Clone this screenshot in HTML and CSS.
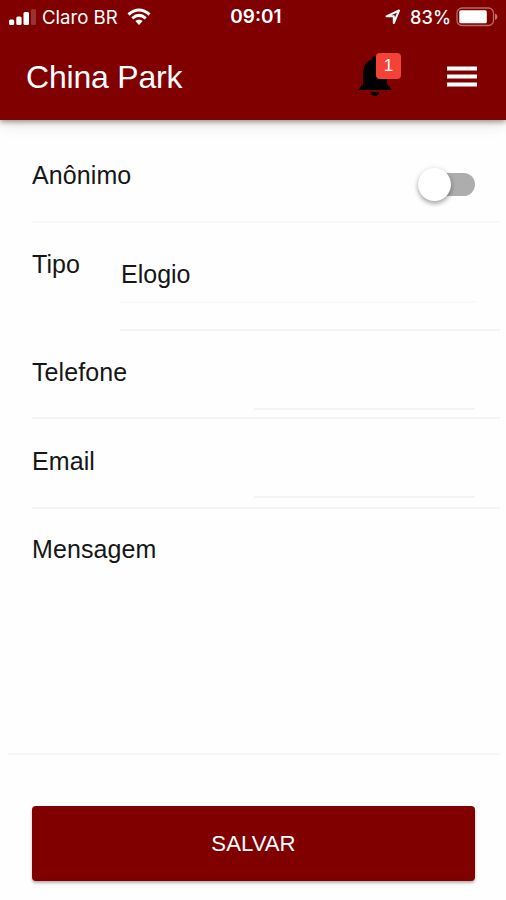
FILE: index.html
```html
<!DOCTYPE html>
<html lang="pt-BR">
<head>
<meta charset="utf-8">
<title>China Park</title>
<link rel="stylesheet" href="styles.css">
</head>
<body>
<header class="header">
  <div class="status">
    <div class="status-left">
      <svg class="signal" width="27" height="18" viewBox="0 0 27 18"><g fill="#fff"><rect x="0" y="11.500" width="5.200" height="5.500" rx="1.5"/><rect x="7.300" y="8.500" width="5.300" height="8.500" rx="1.5"/><rect x="14.500" y="4" width="5.500" height="13" rx="1.5"/><rect x="22" y="1" width="5" height="16" rx="1.5" opacity=".2"/></g></svg>
      <span class="carrier">Claro BR</span>
      <svg class="wifi" width="24" height="18" viewBox="0 0 24 18"><g fill="none" stroke="#fff" stroke-width="3"><path d="M1.500 6.500Q12-2.500 22.500 6.500"/><path d="M5.300 10.300Q12 4.500 18.700 10.300"/></g><path fill="#fff" d="M8.300 13.100Q12 10 15.700 13.100L12 17z"/></svg>
    </div>
    <span class="clock">09:01</span>
    <div class="status-right">
      <svg class="location" width="17" height="17" viewBox="0 0 17 17"><path fill="none" stroke="#fff" stroke-width="2" stroke-linejoin="round" d="M2.500 8.300L15 2.500L9.800 15V8.300z"/></svg>
      <span class="percent">83%</span>
      <svg class="battery" width="42" height="20" viewBox="0 0 42 20"><rect x="1" y="1" width="36.500" height="17.500" rx="5" fill="none" stroke="#fff" stroke-opacity=".42" stroke-width="1.300"/><rect x="3.300" y="3.300" width="27.500" height="13" rx="1.500" fill="#fff"/><path fill="#fff" fill-opacity=".45" d="M39 6.500Q41.500 7.500 41.500 9.700T39 13z"/></svg>
    </div>
  </div>
  <div class="toolbar">
    <h1 class="title">China Park</h1>
    <div class="bell">
      <svg width="34" height="41" viewBox="0 0 34 41"><path d="M0 34L5 28V18C5 10 8 5 14 3.500C14 1 15 0 17 0S20 1 20 3.500C26 5 29 10 29 18V28L34 34zM12.500 36H21.500Q20.500 40 17 40T12.500 36z"/></svg>
      <span class="badge">1</span>
    </div>
    <svg class="menu" width="30" height="22" viewBox="0 0 30 22"><path fill="#fff" d="M0 .5h30v4H0zM0 8.500h30v4H0zM0 16.500h30v4H0z"/></svg>
  </div>
</header>
<main class="form">
  <div class="row row-toggle"><span class="label">Anônimo</span><span class="toggle"><span class="knob"></span></span></div>
  <div class="row row-select"><span class="label">Tipo</span><div class="select-area"><div class="select">Elogio</div></div></div>
  <div class="row row-phone"><span class="label">Telefone</span><div class="field"></div></div>
  <div class="row row-email"><span class="label">Email</span><div class="field"></div></div>
  <div class="message"><span class="label">Mensagem</span></div>
  <button class="save">SALVAR</button>
</main>
</body>
</html>
```
FILE: styles.css
```css
* { box-sizing: border-box; }
body {
  margin: 0;
  height: 900px;
  overflow: hidden;
  background: #fefefe;
  color: #161616;
  font-family: "Liberation Sans", Arial, sans-serif;
}
svg { display: block; flex: none; }
.header {
  position: relative;
  height: 120px;
  background: #800000;
  color: #fff;
  box-shadow: 0 2px 5px rgba(0, 0, 0, .36), 0 5px 14px rgba(0, 0, 0, .1);
}
.status {
  display: grid;
  grid-template-columns: 1fr auto 1fr;
  align-items: center;
  height: 33px;
  padding: 0 8px 0 9px;
  font: 500 19px/24px Inter, sans-serif;
}
.status-left, .status-right { display: flex; align-items: center; }
.status-right { justify-content: flex-end; }
.carrier { margin-left: 6px; font-size: 18.6px; font-weight: 400; }
.wifi { margin-left: 9px; }
.clock { padding: 1px 0 0 5px; font-weight: 600; }
.percent { margin: 1px 5px 0 9px; font-size: 18.2px; }
.toolbar {
  display: flex;
  align-items: center;
  height: 87px;
  padding: 0 29px 0 26px;
}
.title { margin: 0 auto 0 0; font-size: 32px; line-height: 38px; font-weight: 400; letter-spacing: -.2px; }
.bell { position: relative; margin-right: 55px; }
.badge {
  position: absolute;
  left: 18px;
  top: -3px;
  width: 25px;
  height: 26px;
  border-radius: 4px;
  background: #f44336;
  font-size: 17px;
  line-height: 26px;
  text-align: center;
}
.form { padding-top: 14px; font-size: 25px; line-height: 30px; }
.row {
  display: flex;
  justify-content: space-between;
  margin: 0 6px 0 32px;
  padding-right: 25px;
  border-bottom: 2px solid #f4f4f4;
}
.label { padding-top: 26px; letter-spacing: .1px; }
.row-toggle { height: 89px; border-color: #f8f8f8; }
.toggle {
  width: 54px;
  height: 23px;
  margin-top: 39px;
  border-radius: 12px;
  background: #adadad;
}
.knob {
  display: block;
  width: 33px;
  height: 33px;
  margin: -5px 0 0 -3px;
  border-radius: 50%;
  background: #fff;
  box-shadow: 0 3px 4px rgba(0, 0, 0, .25), 0 1px 6px rgba(0, 0, 0, .15);
}
.row-select { height: 108px; padding-right: 0; border: 0; }
.select-area {
  width: 380px;
  padding: 36px 25px 0 0;
  border-bottom: 2px solid #f4f4f4;
}
.select { height: 44px; padding-left: 1px; border-bottom: 2px solid #f9f9f9; }
.row-phone { height: 88px; }
.row-phone .label { padding-top: 26px; }
.field { width: 221px; height: 79px; border-bottom: 2px solid #f4f4f4; }
.row-email { height: 90px; }
.row-email .label { padding-top: 27px; }
.message {
  height: 246px;
  margin: 0 6px 0 8px;
  padding: 25px 24px 0;
  border-bottom: 2px solid #f6f6f6;
}
.message .label { padding: 0; }
.save {
  display: block;
  width: 443px;
  height: 75px;
  margin: 51px 0 0 32px;
  padding: 0;
  border: 0;
  border-radius: 4px;
  background: #800000;
  box-shadow: 0 2px 3px rgba(0, 0, 0, .3);
  color: #fff;
  font: 22.2px/30px "Liberation Sans", Arial, sans-serif;
}
```
